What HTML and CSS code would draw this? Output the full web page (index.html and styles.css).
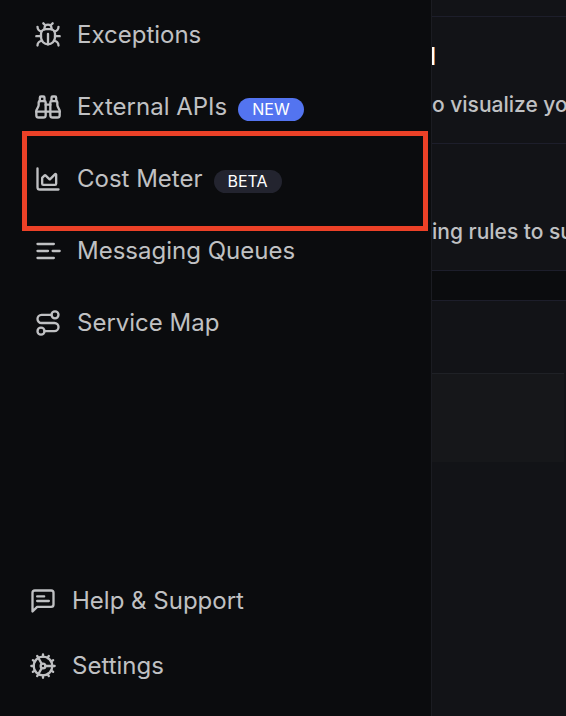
FILE: index.html
```html
<!DOCTYPE html>
<html lang="en">
  <head>
    <meta charset="UTF-8" />
    <title>Navigation</title>
    <link rel="stylesheet" href="styles.css">
  </head>
  <body>
    <div class="layout">
      <aside class="sidebar">
        <nav class="nav">
          <a class="nav-item" href="#">
            <svg class="icon" viewBox="0 0 24 24">
              <path d="M8 2l1.9 1.9M14.1 3.9L16 2M9 7.1v-1a3 3 0 1 1 6 0v1" />
              <path d="M12 20c-3.3 0-6-2.7-6-6v-3a4 4 0 0 1 4-4h4a4 4 0 0 1 4 4v3c0 3.3-2.7 6-6 6" />
              <path d="M12 20v-9M6.5 9C4.6 8.8 3 7.1 3 5M6 13H2M3 21c0-2.1 1.7-3.9 3.8-4M21 5c0 2.1-1.6 3.8-3.5 4M22 13h-4M17.2 17c2.1.1 3.8 1.9 3.8 4" />
            </svg>
            <span>Exceptions</span>
          </a>
          <a class="nav-item" href="#">
            <svg class="icon" viewBox="0 0 24 24">
              <path d="M10 10h4M22 16H2" />
              <path d="M19 7V4a1 1 0 0 0-1-1h-2a1 1 0 0 0-1 1v3M9 7V4a1 1 0 0 0-1-1H6a1 1 0 0 0-1 1v3" />
              <path d="M20 21a2 2 0 0 0 2-2v-3.851c0-1.39-2-2.962-2-4.829V8a1 1 0 0 0-1-1h-4a1 1 0 0 0-1 1v11a2 2 0 0 0 2 2z" />
              <path d="M4 21a2 2 0 0 1-2-2v-3.851c0-1.39 2-2.962 2-4.829V8a1 1 0 0 1 1-1h4a1 1 0 0 1 1 1v11a2 2 0 0 1-2 2z" />
            </svg>
            <span>External APIs</span>
            <span class="badge badge-new">NEW</span>
          </a>
          <a class="nav-item highlighted" href="#">
            <svg class="icon" viewBox="0 0 24 24">
              <path d="M3 3v16a2 2 0 0 0 2 2h16" />
              <path d="M7 11.207a.5.5 0 0 1 .146-.353l2-2a.5.5 0 0 1 .708 0l3.292 3.292a.5.5 0 0 0 .708 0l4.292-4.292a.5.5 0 0 1 .854.353V16a1 1 0 0 1-1 1H8a1 1 0 0 1-1-1z" />
            </svg>
            <span>Cost Meter</span>
            <span class="badge">BETA</span>
          </a>
          <a class="nav-item" href="#">
            <svg class="icon" viewBox="0 0 24 24">
              <path d="M3 6h14M3 12h9M16 12h6M3 18h14" />
            </svg>
            <span>Messaging Queues</span>
          </a>
          <a class="nav-item" href="#">
            <svg class="icon" viewBox="0 0 24 24">
              <circle cx="6" cy="19" r="3" />
              <path d="M9 19h8.5a3.5 3.5 0 0 0 0-7h-11a3.5 3.5 0 0 1 0-7H15" />
              <circle cx="18" cy="5" r="3" />
            </svg>
            <span>Service Map</span>
          </a>
        </nav>
        <nav class="nav nav-footer">
          <a class="nav-item" href="#">
            <svg class="icon" viewBox="0 0 24 24">
              <path d="M21 15a2 2 0 0 1-2 2H7l-4 4V5a2 2 0 0 1 2-2h14a2 2 0 0 1 2 2zM13 8H7M17 12H7" />
            </svg>
            <span>Help &amp; Support</span>
          </a>
          <a class="nav-item" href="#">
            <svg class="icon" viewBox="0 0 24 24">
              <circle cx="12" cy="12" r="8" />
              <circle cx="12" cy="12" r="2" />
              <path d="M12 2v2M12 22v-2M17 20.66l-1-1.73M11 10.27L7 3.34M20.66 17l-1.73-1M3.34 7l1.73 1M14 12h8M2 12h2M20.66 7l-1.73 1M3.34 17l1.73-1M17 3.34l-1 1.73M11 13.73l-4 6.93" />
            </svg>
            <span>Settings</span>
          </a>
        </nav>
      </aside>
      <main class="content">
        <section class="bar"></section>
        <section class="card">
          <h2>d</h2>
          <p>to visualize yo</p>
        </section>
        <section class="card">
          <p>ing rules to su</p>
        </section>
        <div class="spacer"></div>
        <section class="table-head"></section>
        <section class="table-row"></section>
      </main>
    </div>
  </body>
</html>
```

FILE: styles.css
```css
body {
  margin: 0;
  background-color: #121317;
  color: #c0c1c3;
  font-family: Inter, "Liberation Sans", sans-serif;
}

.layout {
  display: flex;
  height: 100vh;
  overflow: hidden;
}

.sidebar {
  flex: 0 0 431px;
  display: flex;
  flex-direction: column;
  justify-content: space-between;
  background-color: #0b0c0e;
  border-right: 1px solid #1b1c22;
}

.nav {
  display: flex;
  flex-direction: column;
  gap: 32px;
  padding: 15px 0 0 34px;
}

.nav-footer {
  gap: 25px;
  padding: 0 0 30px 29px;
}

.nav-item {
  display: flex;
  align-items: center;
  height: 40px;
  color: #c0c1c3;
  font-size: 24px;
  line-height: 40px;
  text-decoration: none;
  white-space: nowrap;
}

.icon {
  width: 28px;
  height: 28px;
  margin-right: 15px;
  fill: none;
  stroke: #c0c1c3;
  stroke-width: 2;
  stroke-linecap: round;
  stroke-linejoin: round;
}

.badge {
  margin: 5px 0 0 11px;
  padding: 0 14px;
  border-radius: 12px;
  background-color: #23242f;
  color: #fff;
  font-size: 16px;
  line-height: 23px;
}

.badge-new {
  background-color: #5374f0;
}

.highlighted {
  position: relative;
}

.highlighted::after {
  content: "";
  position: absolute;
  top: -28px;
  right: 3px;
  bottom: -32px;
  left: -12px;
  border: 5px solid #ec4127;
}

.content {
  flex: 1;
  min-width: 0;
  overflow: hidden;
  white-space: nowrap;
}

.bar {
  height: 16px;
}

.card {
  display: flex;
  flex-direction: column;
  justify-content: flex-end;
  height: 126px;
  border-top: 1px solid #1d1e2b;
}

.card h2 {
  margin: 0;
  color: #fff;
  font-size: 24px;
  font-weight: 600;
  line-height: 32px;
  text-indent: -11px;
}

.card p {
  margin: 16px 0 22px;
  font-size: 21px;
  font-weight: 500;
  line-height: 32px;
}

.card h2 + p {
  text-indent: -7px;
}

.spacer {
  height: 29px;
  background-color: #0b0c0e;
  border-top: 1px solid #1d1e2b;
  border-bottom: 1px solid #1d1e2b;
}

.table-head {
  height: 72px;
}

.table-row {
  height: 88px;
  margin-right: 2px;
  background-color: #16171a;
  border-top: 1px solid #1f2126;
}
```
